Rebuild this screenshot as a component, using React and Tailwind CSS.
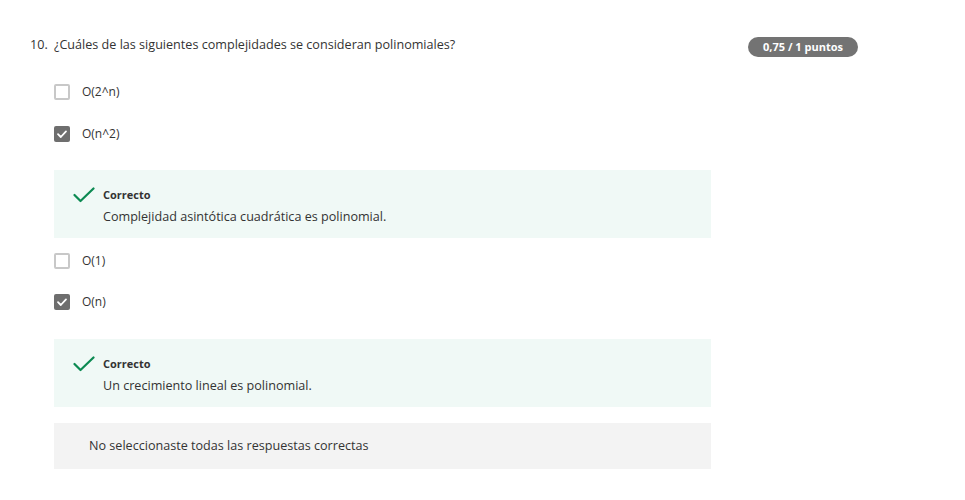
import React from 'react';

const options = [
  { label: 'O(2^n)', checked: false },
  { label: 'O(n^2)', checked: true, feedback: 'Complejidad asintótica cuadrática es polinomial.' },
  { label: 'O(1)', checked: false },
  { label: 'O(n)', checked: true, feedback: 'Un crecimiento lineal es polinomial.' },
];

function Checkbox({ checked }) {
  if (checked) {
    return (
      <span className="flex h-4 w-4 items-center justify-center rounded-[2px] bg-[#6e6e6e]">
        <svg width="12" height="12" viewBox="0 0 12 12" fill="none">
          <path d="M2 6.2 L4.8 9 L10 3.4" stroke="white" strokeWidth="1.8" strokeLinecap="round" strokeLinejoin="round" />
        </svg>
      </span>
    );
  }
  return <span className="block h-4 w-4 rounded-[2px] border-2 border-[#c8c8c8] bg-white" />;
}

function Feedback({ text }) {
  return (
    <div className="flex h-[68px] w-[657px] bg-[#f0f9f6] pl-[19px] pt-[17px]">
      <svg width="22" height="16" viewBox="0 0 22 16" fill="none">
        <path d="M1.5 8 L7.5 14 L20.5 1.5" stroke="#0c8a52" strokeWidth="2.2" strokeLinecap="round" strokeLinejoin="round" />
      </svg>
      <div className="ml-[8px] flex flex-col">
        <span className="text-[11px] font-bold leading-[16px] text-[#333]">Correcto</span>
        <span className="mt-[5px] text-[12.6px] leading-[18px] text-[#333]">{text}</span>
      </div>
    </div>
  );
}

export default function App() {
  return (
    <div className="min-h-[500px] bg-white pl-[30px] pt-[36px] text-[#333]" style={{ fontFamily: '"Open Sans", sans-serif' }}>
      <div className="flex w-[828px] items-start justify-between">
        <div className="flex text-[12.6px] leading-[18px]">
          <span className="w-[24px]">10.</span>
          <span>¿Cuáles de las siguientes complejidades se consideran polinomiales?</span>
        </div>
        <span className="mt-[1px] flex h-[20px] w-[110px] items-center justify-center rounded-full bg-[#737373] text-[11px] font-bold text-white">
          0,75 / 1 puntos
        </span>
      </div>

      <div className="ml-[24px] mt-[27px] flex flex-col">
        <div className="flex h-4 items-center">
          <Checkbox checked={false} />
          <span className="ml-[12px] text-[12px]">O(2^n)</span>
        </div>
        <div className="mt-[26px] flex h-4 items-center">
          <Checkbox checked />
          <span className="ml-[12px] text-[12px]">O(n^2)</span>
        </div>
        <div className="mt-[28px]">
          <Feedback text={options[1].feedback} />
        </div>
        <div className="mt-[15px] flex h-4 items-center">
          <Checkbox checked={false} />
          <span className="ml-[12px] text-[12px]">O(1)</span>
        </div>
        <div className="mt-[25px] flex h-4 items-center">
          <Checkbox checked />
          <span className="ml-[12px] text-[12px]">O(n)</span>
        </div>
        <div className="mt-[29px]">
          <Feedback text={options[3].feedback} />
        </div>
        <div className="mt-[16px] flex h-[46px] w-[657px] items-center bg-[#f3f3f3] pl-[35px] text-[12.6px]">
          No seleccionaste todas las respuestas correctas
        </div>
      </div>
    </div>
  );
}
